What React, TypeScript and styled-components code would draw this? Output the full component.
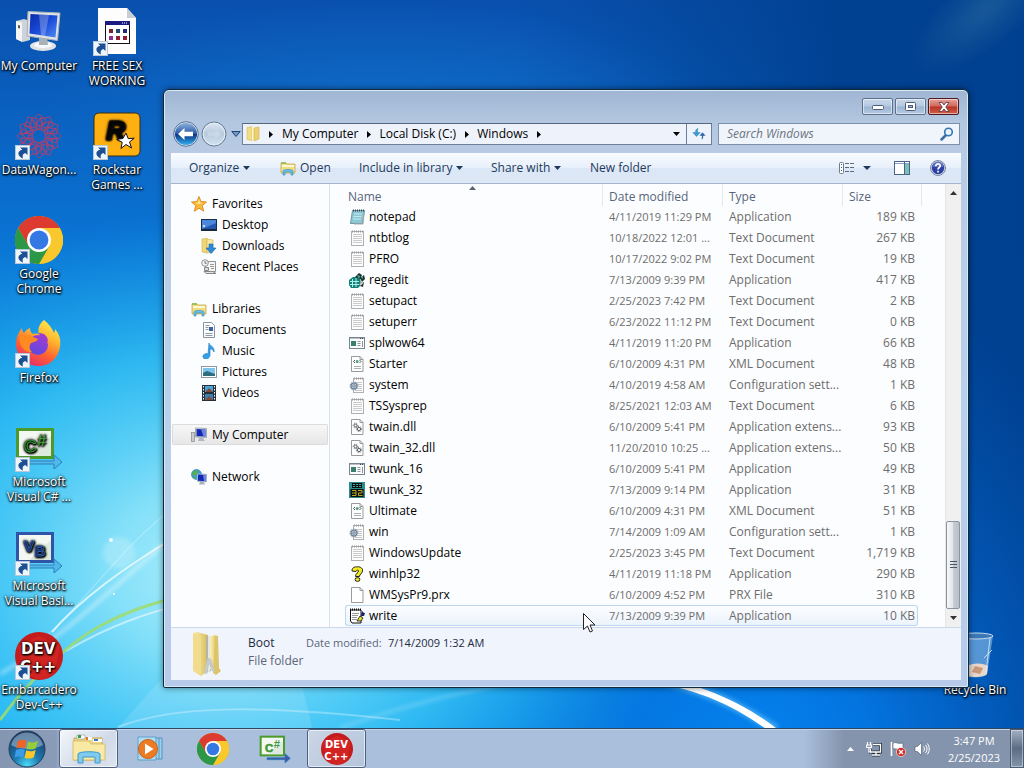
import React from "react";
import styled, { createGlobalStyle, css } from "styled-components";

const GlobalStyle = createGlobalStyle`
  *, *::before, *::after { box-sizing: border-box; }
  body { margin: 0; overflow: hidden; }
  body, button, input, table {
    font-family: "Open Sans", "Noto Sans", sans-serif;
    font-size: 12px;
    line-height: 16px;
  }
  button, input { border: 0; padding: 0; margin: 0; background: none; color: inherit; }
  svg { display: block; flex: none; }
`;

/* ---------- wallpaper ---------- */

const Screen = styled.div`
  position: relative;
  display: flex;
  flex-direction: column;
  height: 100vh;
  overflow: hidden;
  background: #0a63c4;
`;

const WallpaperSvg = styled.svg`
  position: absolute;
  inset: 0;
  width: 100%;
  height: 100%;
`;

const Wallpaper = () => (
  <WallpaperSvg viewBox="0 0 1024 768" preserveAspectRatio="none" aria-hidden="true">
    <defs>
      <linearGradient id="wBase" x1="0" y1="0" x2="0" y2="1">
        <stop offset="0" stopColor="#0a50ae" />
        <stop offset="0.3" stopColor="#0a72d2" />
        <stop offset="0.55" stopColor="#12a0ea" />
        <stop offset="1" stopColor="#10a4f2" />
      </linearGradient>
      <linearGradient id="wRight" x1="0" y1="0" x2="1" y2="0">
        <stop offset="0.5" stopColor="#004294" stopOpacity="0" />
        <stop offset="0.82" stopColor="#004090" stopOpacity="0.95" />
        <stop offset="1" stopColor="#004090" />
      </linearGradient>
      <radialGradient id="wRightLow" gradientUnits="userSpaceOnUse" cx="0" cy="0" r="1" gradientTransform="translate(760 800) scale(420 560)">
        <stop offset="0" stopColor="#0488f4" />
        <stop offset="0.3" stopColor="#0478e6" stopOpacity="0.9" />
        <stop offset="1" stopColor="#0460c8" stopOpacity="0" />
      </radialGradient>
      <radialGradient id="wGlow" gradientUnits="userSpaceOnUse" cx="0" cy="0" r="1" gradientTransform="translate(220 570) scale(460 360)">
        <stop offset="0" stopColor="#b4f1fb" />
        <stop offset="0.25" stopColor="#8ee6fa" stopOpacity="0.9" />
        <stop offset="0.6" stopColor="#3cc8f6" stopOpacity="0.7" />
        <stop offset="1" stopColor="#18a0ee" stopOpacity="0" />
      </radialGradient>
      <radialGradient id="wTop" gradientUnits="userSpaceOnUse" cx="0" cy="0" r="1" gradientTransform="translate(380 130) scale(340 130)">
        <stop offset="0" stopColor="#1472cc" stopOpacity="0.7" />
        <stop offset="1" stopColor="#1472cc" stopOpacity="0" />
      </radialGradient>
      <radialGradient id="wCorner" gradientUnits="userSpaceOnUse" cx="0" cy="0" r="1" gradientTransform="translate(985 10) rotate(-40) scale(90 36)">
        <stop offset="0" stopColor="#3070a0" stopOpacity="0.5" />
        <stop offset="1" stopColor="#3070a0" stopOpacity="0" />
      </radialGradient>
      <filter id="wSoft" x="-20%" y="-20%" width="140%" height="140%">
        <feGaussianBlur stdDeviation="2" />
      </filter>
    </defs>
    <rect width="1024" height="768" fill="url(#wBase)" />
    <rect width="1024" height="768" fill="url(#wRight)" />
    <rect width="1024" height="768" fill="url(#wRightLow)" />
    <rect width="1024" height="768" fill="url(#wTop)" />
    <rect width="1024" height="768" fill="url(#wCorner)" />
    <rect width="1024" height="768" fill="url(#wGlow)" />
    <path d="M118 728C150 690 200 640 230 600L290 640C300 680 308 705 312 728Z" fill="#fff" opacity="0.12" />
    <path d="M0 674C60 640 110 590 164 544" fill="none" stroke="#fff" strokeWidth="3" opacity="0.5" filter="url(#wSoft)" />
    <path d="M52 632C80 600 120 570 180 534" fill="none" stroke="#fff" strokeWidth="2" opacity="0.7" />
    <path d="M30 650C80 610 110 560 164 515" fill="none" stroke="#fff" strokeWidth="1" opacity="0.4" />
    <path d="M66 651C110 625 150 612 190 602" fill="none" stroke="#fff" strokeWidth="2" opacity="0.5" />
    <path d="M0 720C22 690 60 648 100 626C125 612 145 606 180 596" fill="none" stroke="#9fdc6c" strokeWidth="3" opacity="0.85" />
    <circle cx="119" cy="553" r="16" fill="#fff" opacity="0.22" filter="url(#wSoft)" />
    <circle cx="111" cy="540" r="2" fill="#fff" opacity="0.8" />
    <circle cx="114" cy="594" r="1" fill="#fff" opacity="0.9" />
    <path d="M118 727C170 707 250 703 400 720" fill="none" stroke="#fff" strokeWidth="2" opacity="0.3" />
    <path d="M340 728C450 690 520 680 600 672" fill="none" stroke="#fff" strokeWidth="2" opacity="0.35" filter="url(#wSoft)" />
    <path d="M640 676C700 685 740 706 776 730" fill="none" stroke="#7fd4ff" strokeWidth="10" opacity="0.5" filter="url(#wSoft)" />
    <path d="M640 674C698 682 744 702 781 732L770 732C736 706 694 687 640 680Z" fill="#fff" />
  </WallpaperSvg>
);

/* ---------- large icons ---------- */

const ChromeShape = ({ size }: { size: number }) => (
  <svg width={size} height={size} viewBox="0 0 48 48">
    <circle cx="24" cy="24" r="24" fill="#e2a800" />
    <path d="M24 12h20.8A24 24 0 0 1 24 48l10.4-18z" fill="#f9c82c" />
    <path d="M24 12h20.8A24 24 0 0 0 3.2 12l10.4 18z" fill="#dd3b2f" />
    <path d="M34.4 30L24 48A24 24 0 0 1 3.2 12l10.4 18z" fill="#2d9748" />
    <circle cx="24" cy="24" r="12" fill="#fff" />
    <circle cx="24" cy="24" r="9.4" fill="#3478e4" />
  </svg>
);

const ShortcutArrow = () => (
  <g>
    <rect x="0.5" y="33.5" width="14" height="14" fill="#eef5fb" stroke="#b8c8d6" />
    <path d="M5 35.500H12.500V43L10.300 41C8 41.500 7 43.500 8 46.500C2 44 2 39 7.300 37.800Z" fill="#1d4f93" />
  </g>
);

const ComputerBig = () => (
  <svg width="48" height="48" viewBox="0 0 48 48">
    <defs>
      <linearGradient id="scr" x1="0" y1="0" x2="1" y2="1">
        <stop offset="0" stopColor="#0a2aa8" />
        <stop offset="0.5" stopColor="#1a4ad8" />
        <stop offset="1" stopColor="#4f8cf4" />
      </linearGradient>
    </defs>
    <path d="M1 13L9 11L15 13V32L8 34L1 31Z" fill="#cdd3d8" />
    <path d="M1 13L7 14.500V34L1 31Z" fill="#f2f4f5" />
    <path d="M3 17l2 .5v3l-2-.5z" fill="#555" />
    <ellipse cx="28" cy="38" rx="13" ry="5" fill="#dfe3e6" />
    <ellipse cx="28" cy="37" rx="9" ry="3" fill="#f8f9fa" />
    <path d="M24 29h8l1 8h-9z" fill="#aab2b9" />
    <path d="M13 3.500L45 5L42.500 32.500L12 28Z" fill="#dfe3e6" stroke="#a8b0b8" />
    <path d="M15.500 6L42.500 7.500L40.500 29.500L14.500 25.500Z" fill="url(#scr)" />
    <path d="M24 6.500L34 7L30 28L26 27.300Z" fill="#fff" opacity="0.25" />
  </svg>
);

const AppSheet = () => (
  <svg width="48" height="48" viewBox="0 0 48 48">
    <path d="M5 0H34L43 10V46H5Z" fill="#fdfdfd" />
    <path d="M34 0V10H43Z" fill="#c9ced2" />
    <rect x="12.500" y="13.500" width="24" height="22" fill="#fff" stroke="#111" />
    <rect x="12" y="13" width="25" height="4" fill="#1a1a80" />
    <path d="M29 15h6" stroke="#fff" strokeDasharray="1 1" />
    <rect x="16" y="21" width="4" height="4" fill="#7a2230" />
    <rect x="23" y="21" width="4" height="4" fill="#224a6a" />
    <rect x="30" y="21" width="4" height="4" fill="#222a80" />
    <rect x="16" y="28" width="4" height="4" fill="#903090" />
    <rect x="23" y="28" width="4" height="4" fill="#902030" />
    <rect x="30" y="28" width="4" height="4" fill="#902030" />
    <ShortcutArrow />
  </svg>
);

const Wagon = () => (
  <svg width="48" height="48" viewBox="0 0 48 48">
    <g fill="none" stroke="#b0406c" strokeWidth="0.900">
      {[0, 30, 60, 90, 120, 150, 180, 210, 240, 270, 300, 330].map((a) => (
        <g key={a} transform={`rotate(${a} 24 24)`}>
          <path d="M24 18L17 8L24 2L31 8Z" />
          <path d="M24 14L35 9L32 21" />
        </g>
      ))}
      <circle cx="24" cy="24" r="7" />
    </g>
    <ShortcutArrow />
  </svg>
);

const IconText = styled.text<{ $font?: string }>`
  font-family: ${(p) => p.$font || '"Liberation Sans"'}, sans-serif;
  font-weight: 700;
`;

const Rockstar = () => (
  <svg width="48" height="48" viewBox="0 0 48 48">
    <rect x="1" y="1" width="46" height="43" rx="5" fill="#fdb010" stroke="#3a2c10" />
    <IconText x="13" y="27" fontSize="26" fontStyle="italic" fill="#0d0d0d" stroke="#0d0d0d">R</IconText>
    <path d="M33 21l2.200 5.600 6-.4-4.700 3.800 2 6-5.500-3.500-5 4 1.200-6.300-5.600-2.800 6.300-.9z" fill="#fff" stroke="#111" />
    <ShortcutArrow />
  </svg>
);

const ChromeBig = () => (
  <svg width="48" height="48" viewBox="0 0 48 48">
    <ChromeShape size={48} />
    <ShortcutArrow />
  </svg>
);

const Firefox = () => (
  <svg width="48" height="48" viewBox="0 0 48 48">
    <defs>
      <linearGradient id="ff" x1="0.8" y1="0" x2="0.3" y2="1">
        <stop offset="0" stopColor="#fff04f" />
        <stop offset="0.35" stopColor="#ffb52e" />
        <stop offset="0.65" stopColor="#ff6530" />
        <stop offset="1" stopColor="#e62a6d" />
      </linearGradient>
      <linearGradient id="ffp" x1="0.7" y1="0" x2="0.3" y2="1">
        <stop offset="0" stopColor="#a23ad0" />
        <stop offset="1" stopColor="#5a4ae0" />
      </linearGradient>
    </defs>
    <path d="M29 0C34 4 37 8 39 13C40 11 40 10 40 9C45 15 46 20 45 27C43 39 34 46 24 46C11 46 2 37 1 25C1 18 3 13 7 8C7 11 8 12 9 13C11 10 13 9 15 8C15 11 16 13 18 14C21 13 23 14 24 14C22 9 25 3 29 0Z" fill="url(#ff)" />
    <circle cx="23" cy="25" r="10" fill="url(#ffp)" />
    <path d="M4 18C9 14 14 14 18 17L23 19C22 22 18 22 16 23C14 26 14 29 17 32C9 33 5 26 4 18Z" fill="#ff8a20" />
    <path d="M24 13C30 13 33 17 33 22C31 19 28 17 25 17Z" fill="#9c3cd0" />
    <ShortcutArrow />
  </svg>
);

const VisualStudio = ({ kind, size = 48, arrow = true }: { kind: "cs" | "vb"; size?: number; arrow?: boolean }) => {
  const edge = kind === "cs" ? "#4c9a2c" : "#2f55a8";
  const ink = kind === "cs" ? "#3f9a3c" : "#2f5fb0";
  return (
    <svg width={size} height={size} viewBox="0 0 48 48">
      <rect x="1" y="4" width="38" height="31" fill={edge} />
      <rect x="4" y="7" width="32" height="25" fill="#f4f8f2" />
      <path d="M36 12V32H14Z" fill="#d4e4d4" opacity="0.7" />
      {kind === "cs" ? (
        <>
          <IconText x="9" y="28" fontSize="17" fill={ink} stroke={ink}>C</IconText>
          <IconText x="22" y="22" fontSize="17" fill={ink}>#</IconText>
        </>
      ) : (
        <>
          <IconText x="9" y="23" fontSize="15" fill={ink} stroke={ink}>V</IconText>
          <IconText x="20" y="28" fontSize="14" fill={ink} stroke={ink}>B</IconText>
        </>
      )}
      <path d="M12 37H39V31L47 38L39 45V40H12Z" fill={kind === "cs" && !arrow ? "#4058a8" : "#52b8ec"} stroke="#2a80b8" />
      {arrow && <ShortcutArrow />}
    </svg>
  );
};

const DevCpp = ({ size = 48, arrow = true }: { size?: number; arrow?: boolean }) => (
  <svg width={size} height={size} viewBox="0 0 48 48">
    <circle cx="24" cy="24" r="24" fill="#c41c1c" />
    <path d="M3 14L24 4l21 10-6 28-12 6L9 42z" fill="#dc2a26" opacity="0.6" />
    <IconText $font='"DejaVu Sans"' x="6" y="22" fontSize="15" fill="#fff">DEV</IconText>
    <IconText $font='"DejaVu Sans"' x="5" y="40" fontSize="15" fill="#fff">C++</IconText>
    {arrow && <ShortcutArrow />}
  </svg>
);

const RecycleBin = () => (
  <svg width="48" height="48" viewBox="0 0 48 48">
    <path d="M8 5L42 4L36 42C35 46 15 47 14 42Z" fill="#9cc8ee" opacity="0.55" />
    <ellipse cx="25" cy="4" rx="17" ry="3" fill="#3a78b8" stroke="#c8dce8" />
    <path d="M14 36C20 30 32 31 37 34L36 42C33 46 16 46 14 42Z" fill="#e8d8cc" />
    <path d="M24 34l8 2-3 6-8-2z" fill="#c89878" />
    <path d="M39 6L35 41M41 18L33 26" stroke="#dcecf8" fill="none" opacity="0.8" />
  </svg>
);

/* ---------- desktop ---------- */

const Desktop = styled.main`
  position: relative;
  flex: 1;
  min-height: 0;
  display: grid;
  grid-template-columns: repeat(auto-fill, 78px);
  grid-template-rows: repeat(7, 104px);
  grid-auto-flow: column;
`;

const DesktopButton = styled.button<{ $last?: boolean }>`
  display: flex;
  flex-direction: column;
  align-items: center;
  gap: 2px;
  padding-top: 8px;
  color: #fff;
  line-height: 15px;
  text-shadow: 0 1px 2px #000, 1px 1px 2px #000, 0 0 3px rgba(0, 0, 0, 0.8);
  ${(p) => p.$last && css`grid-column: -2 / -1; grid-row: 7;`}
`;

const Label = styled.span`
  white-space: pre;
  text-align: center;
`;

type Entry = [string, React.ReactNode];

const desktopEntries: Entry[] = [
  ["My Computer", <ComputerBig />],
  ["DataWagon...", <Wagon />],
  ["Google\nChrome", <ChromeBig />],
  ["Firefox", <Firefox />],
  ["Microsoft\nVisual C# ...", <VisualStudio kind="cs" />],
  ["Microsoft\nVisual Basi...", <VisualStudio kind="vb" />],
  ["Embarcadero\nDev-C++", <DevCpp />],
  ["FREE SEX\nWORKING", <AppSheet />],
  ["Rockstar\nGames ...", <Rockstar />],
];

/* ---------- small icons ---------- */

const Small = ({ children, size = 16 }: { children: React.ReactNode; size?: number }) => (
  <svg width={size} height={size} viewBox="0 0 16 16" aria-hidden="true">{children}</svg>
);

const FolderIcon = () => (
  <Small>
    <path d="M2 1.500l5-1v14l-5-1z" fill="#f2dc84" stroke="#d8bc60" strokeWidth="0.600" />
    <path d="M7 .5l3 1V13l-3 2z" fill="#fdf6c8" />
    <path d="M9 2l5-1v12l-5 2z" fill="#ecd070" stroke="#d0b050" strokeWidth="0.600" />
  </Small>
);

const LibraryIcon = () => (
  <Small>
    <path d="M1 3h5l1 1h8v9H1z" fill="#f0dc84" stroke="#c8a848" strokeWidth="0.800" />
    <path d="M2 5h12v2H2z" fill="#fff8d0" />
    <path d="M1 2h5v2H1z" fill="#9cc060" />
    <path d="M3 15V11c0-2 10-2 10 0v4h-2v-3H5v3z" fill="#6cc0e8" stroke="#3a90c0" strokeWidth="0.700" />
  </Small>
);

const StarIcon = () => (
  <Small>
    <path d="M8 0.500l2 5 5.500.5-4.200 3.600 1.400 5.600L8 12.200l-4.700 3 1.400-5.600L.5 6 6 5.500z" fill="#fcb838" stroke="#d88820" strokeWidth="0.900" />
    <path d="M8 3l1.200 3.500L12 7 8 8 4 7l2.800-.5z" fill="#ffe490" />
  </Small>
);

const DesktopIcon = () => (
  <Small>
    <rect x="0.500" y="2.500" width="15" height="11" fill="#2458b0" stroke="#1a2c48" />
    <path d="M1 3h14v3L1 12z" fill="#4a88dc" />
    <rect x="1" y="12" width="14" height="1.500" fill="#16243c" />
    <rect x="2" y="8" width="2" height="2" fill="#c8e0f8" />
  </Small>
);

const DownloadsIcon = () => (
  <Small>
    <path d="M1 1l5-1v15l-5-1z" fill="#f0d878" stroke="#d0b050" strokeWidth="0.600" />
    <path d="M6 1l6 1v12l-6 1z" fill="#f8e8a0" stroke="#d0b050" strokeWidth="0.600" />
    <path d="M8 6h4v4h3l-5 5.500L5 10h3z" fill="#2d8ad8" stroke="#1868b0" strokeWidth="0.600" />
  </Small>
);

const RecentIcon = () => (
  <Small>
    <path d="M4.500 2.500h10v10h-10z" fill="#f6f6f6" stroke="#909090" />
    <path d="M9 5.500h4M9 7.500h4M10 9.500h3" stroke="#999" />
    <path d="M3 12.500h9l3 2H5z" fill="#e4e4e4" stroke="#888" />
    <circle cx="4" cy="4" r="3.300" fill="#f0f4f8" stroke="#888" strokeWidth="0.900" />
    <path d="M4 2V4.300h1.700" fill="none" stroke="#555" strokeWidth="0.800" />
    <path d="M3.500 8.500h4v3h-4z" fill="#ddd" stroke="#888" />
  </Small>
);

const DocumentsIcon = () => (
  <Small>
    <path d="M2.500.5h8l3 3v12h-11z" fill="#fdfdfd" stroke="#8a94a0" />
    <path d="M4.500 3.500h4M4.500 5.500h3M4.500 7.500h3M4.500 11.500h7M4.500 13.500h7" stroke="#8a98a8" />
    <rect x="8" y="5" width="4" height="4" fill="#3a62a0" />
  </Small>
);

const MusicIcon = () => (
  <Small>
    <path d="M8 0c0 3 6 3 5 9-.5-2-2-3-4-3v6c0 5-8 5-7 1 .5-2 3-3 5-2z" fill="#38a0e8" stroke="#1c78c0" strokeWidth="0.600" />
  </Small>
);

const PicturesIcon = () => (
  <Small>
    <rect x="0.500" y="2.500" width="15" height="11" fill="#fff" stroke="#8a98a8" />
    <rect x="2" y="4" width="12" height="8" fill="#7cc4ec" />
    <path d="M2 9l4-2 8 3v2H2z" fill="#2c6c7c" />
  </Small>
);

const VideosIcon = () => (
  <Small>
    <rect x="1" y="0" width="14" height="16" fill="#26303a" />
    <rect x="4" y="1" width="8" height="6" fill="#4aa4d8" />
    <rect x="4" y="9" width="8" height="6" fill="#3a80b0" />
    <path d="M5 6l3-3 4 4H5zM5 14l3-3 4 4H5z" fill="#844a38" />
    <path d="M2.500 1v15M13.500 1v15" stroke="#fff" strokeDasharray="1.500 1.500" />
  </Small>
);

const ComputerIcon = () => (
  <Small>
    <rect x="0.500" y="5.500" width="3" height="9" fill="#c8ccd0" stroke="#888" strokeWidth="0.700" />
    <path d="M4.500 1l11 .5v9L4.500 10z" fill="#e0e4e8" stroke="#8890a0" strokeWidth="0.700" />
    <path d="M5.500 2l9 .4v7.200l-9-.4z" fill="#1428b0" />
    <path d="M10 2.200l4.500.2v7.200l-2-.1z" fill="#6a84e4" />
    <path d="M8 11h4l2 3H7z" fill="#b0b8c0" />
  </Small>
);

const NetworkIcon = () => (
  <Small>
    <circle cx="5.500" cy="5.500" r="5" fill="#3c9ed4" stroke="#2878a8" strokeWidth="0.600" />
    <path d="M3 1.500l4 .5-1 3-3 2-2-2zM2 8l3 0-1 2z" fill="#58b048" />
    <path d="M6.500 5l9 .4v7.400l-9-.6z" fill="#1428b0" stroke="#a8b4c8" />
    <path d="M12 6l3 .2v6l-2-.1z" fill="#6a84e4" />
    <path d="M9 13h4l1 2.500H8z" fill="#a8b0b8" />
  </Small>
);

const Sheet = ({ children }: { children?: React.ReactNode }) => (
  <Small>
    <path d="M2.500.5h8.500l3 3v12H2.500z" fill="#fff" stroke="#9a9a9a" />
    <path d="M11 .5v3h3" fill="none" stroke="#9a9a9a" />
    {children}
  </Small>
);

const TextSheet = () => (
  <Small>
    <rect x="2.500" y="1.500" width="12" height="14" fill="#fdfdfd" stroke="#b0b0b0" />
    <path d="M3 1.500h12" stroke="#999" strokeWidth="2" strokeDasharray="1 1" />
    <path d="M4 4.500h9M4 6.500h9M4 8.500h9M4 10.500h9M4 12.500h9" stroke="#cacaca" />
  </Small>
);

const Gear = ({ x, y, r, c = "#6a7c90" }: { x: number; y: number; r: number; c?: string }) => (
  <g fill="none" stroke={c}>
    <circle cx={x} cy={y} r={r} strokeWidth="1" />
    <circle cx={x} cy={y} r={r + 1} strokeWidth="1" strokeDasharray="1 1.200" />
  </g>
);

const fileIcons = {
  notepad: () => (
    <Small>
      <path d="M3.500 1.500h12l-2 13h-12z" fill="#8cc8d4" stroke="#6898a4" />
      <path d="M4 1.500h11" stroke="#445" strokeWidth="2" strokeDasharray="1 1" />
      <path d="M5 5h8M4.500 7.500h8M4 10h8" stroke="#c4e8ee" />
      <path d="M15 4l-1 11H5" fill="none" stroke="#aaa" />
    </Small>
  ),
  text: TextSheet,
  regedit: () => (
    <Small>
      <path d="M0 8l4-3h7l1 8-3 3H2l-2-3z" fill="#108078" />
      <path d="M1 9.500h9M1 12.500h9M3.500 7v8M7 6v9" stroke="#b0f0e8" />
      <path d="M6 5l4-4 3 2-2 4zM11 6l4-3 1 4-3 3zM12 10l3 0-1 5-3-1z" fill="#20302c" />
      <path d="M8 3l3 1-1 3zM12 5l2-1v3z" fill="#50b0a4" />
      <path d="M11 13l3-3" stroke="#ccc" strokeWidth="2" />
    </Small>
  ),
  exe: () => (
    <Small>
      <rect x="0.500" y="2.500" width="15" height="11" fill="#fdfdfd" stroke="#788490" />
      <path d="M1 3.500h14" stroke="#b4c0cc" />
      <path d="M11 3.500h3" stroke="#445" strokeDasharray="1 1" />
      <rect x="2" y="6" width="5" height="5" fill="#38806c" />
      <path d="M8.500 6.500h3M8.500 8.500h3M8.500 10.500h3M13.500 6v6" stroke="#8a949c" />
    </Small>
  ),
  xml: () => (
    <Sheet>
      <path d="M6 4L4.500 5.500 6 7M10.500 4L12 5.500 10.500 7" fill="none" stroke="#555" />
      <circle cx="8.200" cy="5.500" r="1.500" fill="#50a080" />
      <path d="M5 10.500h7M5 12.500h7" stroke="#a8b0b8" />
    </Sheet>
  ),
  config: () => (
    <Small>
      <rect x="4.500" y="1.500" width="10" height="14" fill="#fdfdfd" stroke="#b0b0b0" />
      <path d="M5 1.500h10" stroke="#999" strokeWidth="2" strokeDasharray="1 1" />
      <path d="M6 5.500h7M9 7.500h4M10 9.500h3M9 11.500h4M6 13.500h7" stroke="#c8c8c8" />
      <circle cx="5" cy="9" r="4" fill="#b8c8d8" />
      <Gear x={5} y={9} r={3} />
      <circle cx="5" cy="9" r="1.200" fill="#fff" stroke="#6a7c90" />
    </Small>
  ),
  dll: () => (
    <Sheet>
      <Gear x={6.500} y={6.500} r={1.400} c="#555e66" />
      <Gear x={10} y={10} r={1.600} c="#555e66" />
    </Sheet>
  ),
  dos: () => (
    <Small>
      <rect x="0" y="0" width="16" height="16" fill="#2c8c8c" />
      <path d="M3 1h10v5H3zM1.500 7h13v8h-13z" fill="#0c1010" />
      <path d="M4 2.500h8M4 4.500h8" stroke="#38a4a4" strokeDasharray="2 1" />
      <path d="M3 8.500h4v5H3M3 11h4M9 8.500h4V11H9.500v2.500H13.500" fill="none" stroke="#b8a820" />
    </Small>
  ),
  help: () => (
    <Small>
      <path d="M3 5C3 1 6 .8 8.500.8C12 .8 14 2.500 13.500 5C13 8 10.500 8 10.500 10.500H6.500C6.500 7 9.500 7 9.500 5C9.500 3.800 7.500 3.800 7 5.500Z" fill="#f4ec20" stroke="#222" />
      <ellipse cx="8.500" cy="13.500" rx="2.400" ry="1.900" fill="#f4ec20" stroke="#222" />
    </Small>
  ),
  blank: () => <Sheet />,
  write: () => (
    <Small>
      <path d="M1.500 2h10.500v13H3l-1.500-2z" fill="#fff" stroke="#111" />
      <path d="M1 1.500h12" stroke="#111" strokeWidth="2" strokeDasharray="1 1" />
      <path d="M3 5.500h7M3 7.500h6M3 9.500h5M3 11.500h5" stroke="#999" />
      <path d="M8 13l3-5 3 2-2 3z" fill="#e8e020" stroke="#111" strokeWidth="0.800" />
      <path d="M12 8l1-5 2 2 1 0-1 3z" fill="#1c1c70" />
    </Small>
  ),
};

/* ---------- explorer window ---------- */

const Window = styled.section`
  position: absolute;
  inset: 89px 55px 40px 163px;
  display: flex;
  flex-direction: column;
  border: 1px solid #14283c;
  border-radius: 6px 6px 2px 2px;
  padding: 0 6px 6px;
  box-shadow: inset 0 0 0 1px #d4ecfa, 0 0 6px rgba(0, 0, 0, 0.5);
  background: linear-gradient(180deg, #9fb5d2 0, #b3c7e0 32px, #b9cbe4 64px, #b9d0ea 50%, #b8caea 100%);
`;

const TitleBar = styled.header`
  display: flex;
  justify-content: flex-end;
  gap: 2px;
  height: 33px;
  padding: 8px 3px 0 0;
`;

const CaptionButton = styled.button<{ $close?: boolean }>`
  display: flex;
  align-items: center;
  justify-content: center;
  width: 31px;
  height: 17px;
  border: 1px solid ${(p) => (p.$close ? "#4c1a20" : "#5c708c")};
  border-radius: 2px;
  box-shadow: inset 0 0 0 1px rgba(255, 255, 255, 0.5);
  background: ${(p) =>
    p.$close
      ? "linear-gradient(#e4a49c, #d0685c 48%, #b83424 52%, #d0604c)"
      : "linear-gradient(#c8d8ea, #b4c8e0 48%, #9cb4d2 52%, #b4cae2)"};
`;

const NavBar = styled.nav`
  display: flex;
  align-items: center;
  height: 22px;
  margin-bottom: 8px;
  padding: 0 2px 0 1px;
`;

const HistoryButtons = styled.div`
  display: flex;
  align-items: center;
  gap: 2px;
  width: 71px;
  padding-left: 2px;
`;

const HistoryButton = styled.button`
  display: flex;
  margin: -2px 0;
`;

const AddressBar = styled.div`
  display: flex;
  flex: 1;
  align-items: stretch;
  height: 22px;
  border: 1px solid #6c809c;
  border-top-color: #56687f;
  background: #eef3fb;
`;

const Crumb = styled.button`
  display: flex;
  align-items: center;
  gap: 9px;
  padding: 0 8px 0 0;
  color: #000;
`;

const FolderSlot = styled.span`
  display: flex;
  align-items: center;
  gap: 8px;
  padding: 0 9px 0 2px;
`;

const AddressEnd = styled.button<{ $divided?: boolean }>`
  display: flex;
  align-items: center;
  justify-content: center;
  width: ${(p) => (p.$divided ? 25 : 20)}px;
  margin-left: ${(p) => (p.$divided ? 0 : "auto")};
  border-left: ${(p) => (p.$divided ? "1px solid #6c809c" : "0")};
`;

const SearchBox = styled.label`
  display: flex;
  align-items: center;
  flex: 0 1 242px;
  height: 22px;
  margin-left: 6px;
  padding: 0 5px 0 8px;
  border: 1px solid #7c90ac;
  background: #f0f5fc;
`;

const SearchInput = styled.input`
  flex: 1;
  min-width: 0;
  outline: 0;
  font-style: italic;
  &::placeholder { color: #6c7480; opacity: 1; }
`;

const Content = styled.div`
  display: flex;
  flex-direction: column;
  flex: 1;
  min-height: 0;
  margin: 0 1px 1px;
  background: #fcfdfe;
`;

const Toolbar = styled.div`
  display: flex;
  align-items: center;
  height: 31px;
  padding: 0 15px 0 18px;
  border-bottom: 1px solid #a4b4cc;
  color: #1e395b;
  background: linear-gradient(#fafcff, #e8f0fb 48%, #dbe7f6 52%, #dde8f6);
`;

const ToolButton = styled.button<{ $w?: number }>`
  display: flex;
  align-items: center;
  gap: 4px;
  width: ${(p) => (p.$w ? `${p.$w}px` : "auto")};
  white-space: nowrap;
`;

const ToolSpacer = styled.div`
  flex: 1;
`;

const ToolEnd = styled.div`
  display: flex;
  align-items: center;
  gap: 8px;
`;

const Panes = styled.div`
  display: flex;
  flex: 1;
  min-height: 0;
`;

const Sidebar = styled.aside`
  display: flex;
  flex-direction: column;
  flex: none;
  gap: 21px;
  width: 159px;
  padding-top: 9px;
  border-right: 1px solid #d6e2f0;
`;

const SideGroup = styled.div`
  display: flex;
  flex-direction: column;
`;

const SideItem = styled.a<{ $child?: boolean; $active?: boolean }>`
  display: flex;
  align-items: center;
  gap: 5px;
  height: 21px;
  margin: 0 1px;
  padding-left: ${(p) => (p.$child ? 29 : 19)}px;
  border-radius: 2px;
  color: #000;
  text-decoration: none;
  ${(p) =>
    p.$active &&
    css`
      background: linear-gradient(#f8f8f8, #e6e6e6);
      box-shadow: inset 0 0 0 1px #dcdcdc;
    `}
`;

const ListPane = styled.div`
  flex: 1;
  min-width: 0;
  padding: 0 23px 0 15px;
  overflow: hidden;
`;

const FileTable = styled.table`
  width: 100%;
  table-layout: fixed;
  border-collapse: separate;
  border-spacing: 0;
`;

const Col = styled.col<{ $w?: number }>`
  width: ${(p) => (p.$w ? `${p.$w}px` : "auto")};
`;

const Th = styled.th<{ $first?: boolean; $edge?: boolean }>`
  height: 22px;
  padding: ${(p) => (p.$edge ? "0" : p.$first ? "3px 0 0 3px" : "3px 0 0 6px")};
  border-left: ${(p) => (p.$first || p.$edge ? "0" : "1px solid #e2e8f0")};
  border-right: ${(p) => (p.$edge ? "1px solid #e2e8f0" : "0")};
  font-weight: 400;
  text-align: left;
  color: #56667c;
  white-space: nowrap;
`;

const SortMark = styled.svg`
  position: absolute;
  top: 96px;
  left: 305px;
`;

const Td = styled.td<{ $right?: boolean; $main?: boolean; $date?: boolean }>`
  height: 21px;
  padding: ${(p) => (p.$main ? "0 0 0 4px" : p.$right ? "0 3px 0 0" : "0 0 0 7px")};
  font-size: ${(p) => (p.$date ? 11 : 12)}px;
  text-align: ${(p) => (p.$right ? "right" : "left")};
  color: ${(p) => (p.$main ? "#000" : "#6d6d6d")};
  white-space: nowrap;
`;

const Row = styled.tr<{ $hot?: boolean }>`
  ${(p) =>
    p.$hot &&
    css`
      td:not(:last-child) {
        border: solid #bcd8f0;
        border-width: 1px 0;
        background: linear-gradient(#fcfdff, #ebf3fc);
      }
      td:first-child { border-left-width: 1px; border-radius: 3px 0 0 3px; padding-left: 3px; }
      td:nth-child(4) { border-right-width: 1px; border-radius: 0 3px 3px 0; padding-right: 2px; }
    `}
`;

const FileName = styled.span`
  display: flex;
  align-items: center;
  gap: 4px;
`;

const ScrollBar = styled.div`
  display: flex;
  flex-direction: column;
  flex: none;
  width: 16px;
  border-left: 1px solid #e4e6ea;
  background: #f0f0f1;
`;

const ScrollButton = styled.button`
  display: flex;
  align-items: center;
  justify-content: center;
  height: 18px;
`;

const ScrollTrack = styled.div`
  display: flex;
  flex: 1;
  flex-direction: column;
  justify-content: flex-end;
`;

const ScrollThumb = styled.div`
  display: flex;
  align-items: center;
  justify-content: center;
  height: 88px;
  margin: 0 1px 0 0;
  border: 1px solid #8c949e;
  border-radius: 2px;
  background: linear-gradient(90deg, #f6f7f8, #e2e5e9 50%, #c4cad2 55%, #b8c0ca);
`;

const Details = styled.footer`
  display: flex;
  align-items: center;
  height: 53px;
  padding-left: 17px;
  border-top: 1px solid #ccd8ea;
  background: #f0f4fd;
`;

const DetailGrid = styled.dl`
  display: grid;
  grid-template-columns: 58px 82px auto;
  row-gap: 2px;
  margin: 0 0 4px 20px;
`;

const DetailText = styled.dd<{ $dark?: boolean; $date?: boolean }>`
  margin: 0;
  font-size: ${(p) => (p.$date ? 11 : 12)}px;
  white-space: nowrap;
  color: ${(p) => (p.$dark ? "#1e2c40" : "#5a6779")};
`;

const DownArrow = ({ w = 7, fill = "#1e395b" }: { w?: number; fill?: string }) => (
  <svg width={w} height="4" viewBox="0 0 7 4" preserveAspectRatio="none"><path d="M0 0h7L3.500 4z" fill={fill} /></svg>
);

const RightArrow = () => (
  <svg width="4" height="7" viewBox="0 0 4 7"><path d="M0 0v7l4-3.500z" fill="#000" /></svg>
);

const UpArrow = ({ fill = "#333" }: { fill?: string }) => (
  <svg width="7" height="4" viewBox="0 0 7 4"><path d="M0 4h7L3.500 0z" fill={fill} /></svg>
);

type FileRow = [keyof typeof fileIcons, string, string, string, string];

const files: FileRow[] = [
  ["notepad", "notepad", "4/11/2019 11:29 PM", "Application", "189 KB"],
  ["text", "ntbtlog", "10/18/2022 12:01 ...", "Text Document", "267 KB"],
  ["text", "PFRO", "10/17/2022 9:02 PM", "Text Document", "19 KB"],
  ["regedit", "regedit", "7/13/2009 9:39 PM", "Application", "417 KB"],
  ["text", "setupact", "2/25/2023 7:42 PM", "Text Document", "2 KB"],
  ["text", "setuperr", "6/23/2022 11:12 PM", "Text Document", "0 KB"],
  ["exe", "splwow64", "4/11/2019 11:20 PM", "Application", "66 KB"],
  ["xml", "Starter", "6/10/2009 4:31 PM", "XML Document", "48 KB"],
  ["config", "system", "4/10/2019 4:58 AM", "Configuration sett...", "1 KB"],
  ["text", "TSSysprep", "8/25/2021 12:03 AM", "Text Document", "6 KB"],
  ["dll", "twain.dll", "6/10/2009 5:41 PM", "Application extens...", "93 KB"],
  ["dll", "twain_32.dll", "11/20/2010 10:25 ...", "Application extens...", "50 KB"],
  ["exe", "twunk_16", "6/10/2009 5:41 PM", "Application", "49 KB"],
  ["dos", "twunk_32", "7/13/2009 9:14 PM", "Application", "31 KB"],
  ["xml", "Ultimate", "6/10/2009 4:31 PM", "XML Document", "51 KB"],
  ["config", "win", "7/14/2009 1:09 AM", "Configuration sett...", "1 KB"],
  ["text", "WindowsUpdate", "2/25/2023 3:45 PM", "Text Document", "1,719 KB"],
  ["help", "winhlp32", "4/11/2019 11:18 PM", "Application", "290 KB"],
  ["blank", "WMSysPr9.prx", "6/10/2009 4:52 PM", "PRX File", "310 KB"],
  ["write", "write", "7/13/2009 9:39 PM", "Application", "10 KB"],
];

const sideGroups: { name: string; icon: React.ReactNode; active?: boolean; items: Entry[] }[] = [
  {
    name: "Favorites",
    icon: <StarIcon />,
    items: [
      ["Desktop", <DesktopIcon />],
      ["Downloads", <DownloadsIcon />],
      ["Recent Places", <RecentIcon />],
    ],
  },
  {
    name: "Libraries",
    icon: <LibraryIcon />,
    items: [
      ["Documents", <DocumentsIcon />],
      ["Music", <MusicIcon />],
      ["Pictures", <PicturesIcon />],
      ["Videos", <VideosIcon />],
    ],
  },
  { name: "My Computer", icon: <ComputerIcon />, active: true, items: [] },
  { name: "Network", icon: <NetworkIcon />, items: [] },
];

const Explorer = () => (
  <Window aria-label="Windows">
    <TitleBar>
      <CaptionButton aria-label="Minimize">
        <svg width="12" height="8"><rect x="0.500" y="2.500" width="11" height="4" rx="1" fill="#fff" stroke="#4c5c74" /></svg>
      </CaptionButton>
      <CaptionButton aria-label="Maximize">
        <svg width="11" height="9"><rect x="0.500" y="0.500" width="10" height="8" rx="1" fill="#fff" stroke="#4c5c74" /><rect x="3.500" y="3.500" width="4" height="2" fill="#a8bcd6" stroke="#4c5c74" /></svg>
      </CaptionButton>
      <CaptionButton $close aria-label="Close">
        <svg width="12" height="10" viewBox="0 0 12 10"><path d="M1 .5h3L6 3 8 .5h3L7.800 5 11 9.500H8L6 7 4 9.500H1L4.200 5z" fill="#fff" stroke="#5c3038" strokeWidth="0.800" /></svg>
      </CaptionButton>
    </TitleBar>
    <NavBar>
      <HistoryButtons>
        <HistoryButton aria-label="Back">
          <svg width="26" height="26" viewBox="0 0 26 26">
            <defs>
              <linearGradient id="bk" x1="0" y1="0" x2="0" y2="1">
                <stop offset="0" stopColor="#8cb0dc" />
                <stop offset="0.480" stopColor="#2a5ca8" />
                <stop offset="0.520" stopColor="#0c3484" />
                <stop offset="1" stopColor="#34b0f0" />
              </linearGradient>
            </defs>
            <circle cx="13" cy="13" r="12.300" fill="#d4e2f2" stroke="#5c7090" />
            <circle cx="13" cy="13" r="11" fill="url(#bk)" />
            <path d="M5 13l6.500-6v3.800h8.500v4.400h-8.500v3.800z" fill="#fff" />
          </svg>
        </HistoryButton>
        <HistoryButton aria-label="Forward">
          <svg width="26" height="26" viewBox="0 0 26 26">
            <defs>
              <linearGradient id="fw" x1="0" y1="0" x2="0" y2="1">
                <stop offset="0" stopColor="#dce8f4" />
                <stop offset="0.500" stopColor="#b8cadd" />
                <stop offset="1" stopColor="#d4e4f2" />
              </linearGradient>
            </defs>
            <circle cx="13" cy="13" r="12" fill="url(#fw)" stroke="#64788f" />
            <circle cx="13" cy="13" r="10.800" fill="none" stroke="#e4eef8" />
            <path d="M20 13l-6-5v3.300H7v3.400h7V18z" fill="#cad8e6" />
          </svg>
        </HistoryButton>
        <HistoryButton aria-label="Recent pages">
          <svg width="12" height="8" viewBox="0 0 12 8"><path d="M2.800 1.500h8.400L7 6.500z" fill="#6c98cc" stroke="#23456f" /></svg>
        </HistoryButton>
      </HistoryButtons>
      <AddressBar>
        <FolderSlot><FolderIcon /><RightArrow /></FolderSlot>
        <Crumb>My Computer<RightArrow /></Crumb>
        <Crumb>Local Disk (C:)<RightArrow /></Crumb>
        <Crumb>Windows<RightArrow /></Crumb>
        <AddressEnd aria-label="Previous locations"><DownArrow fill="#000" /></AddressEnd>
        <AddressEnd $divided aria-label="Refresh">
          <svg width="15" height="14" viewBox="0 0 15 14">
            <path d="M6 1.500C4.200 1.800 3.500 3 3.500 5.500H.8l3.700 4 3.700-4H5.500C5.500 4 5.500 2.500 6 1.500Z" fill="#3a9cd4" stroke="#1f70a8" strokeWidth="0.400" />
            <path d="M9 13c1.800-.3 2.500-1.500 2.500-4H14.200L10.500 5 6.800 9H9.500C9.500 10.500 9.500 12 9 13Z" fill="#2c64a8" stroke="#fff" strokeWidth="0.600" />
          </svg>
        </AddressEnd>
      </AddressBar>
      <SearchBox>
        <SearchInput placeholder="Search Windows" aria-label="Search Windows" />
        <svg width="14" height="14" viewBox="0 0 14 14">
          <path d="M6 8L1.500 12.500" stroke="#3c6ca4" strokeWidth="2.500" strokeLinecap="round" />
          <circle cx="8.500" cy="5" r="3.800" fill="#e8f4fc" stroke="#3474ac" strokeWidth="1.600" />
        </svg>
      </SearchBox>
    </NavBar>
    <Content>
      <Toolbar>
        <ToolButton $w={91}>Organize <DownArrow /></ToolButton>
        <ToolButton $w={79}><LibraryIcon />Open</ToolButton>
        <ToolButton $w={132}>Include in library <DownArrow /></ToolButton>
        <ToolButton $w={99}>Share with <DownArrow /></ToolButton>
        <ToolButton>New folder</ToolButton>
        <ToolSpacer />
        <ToolEnd>
          <ToolButton aria-label="Change view">
            <svg width="16" height="12" viewBox="0 0 16 12">
              <rect x="0.500" y="0.500" width="4" height="11" rx="1" fill="#fff" stroke="#6c7c90" />
              <path d="M2 2.500h1M2 5.500h1M2 8.500h1" stroke="#4c5c70" />
              <path d="M6 1.500h4M11 1.500h4M6 5.500h4M11 5.500h4M6 9.500h4M11 9.500h4" stroke="#5c6c80" />
            </svg>
          </ToolButton>
          <ToolButton $w={23} aria-label="More options"><DownArrow w={8} /></ToolButton>
          <ToolButton $w={28} aria-label="Preview pane">
            <svg width="16" height="14" viewBox="0 0 16 14">
              <rect x="0.500" y="0.500" width="15" height="13" fill="#fff" stroke="#4c6484" />
              <path d="M1 2.500h14" stroke="#8ca4c0" />
              <rect x="10" y="3" width="5" height="10" fill="#78c0b8" />
              <path d="M10.500 1v12" stroke="#4c6484" />
            </svg>
          </ToolButton>
          <ToolButton aria-label="Help">
            <svg width="16" height="16" viewBox="0 0 16 16">
              <circle cx="8" cy="8" r="7.500" fill="#d0d8e8" stroke="#7c88a4" />
              <circle cx="8" cy="8" r="6.200" fill="#2c40a4" />
              <path d="M2.500 7a5.500 5.500 0 0 1 11 0z" fill="#7c8cd0" opacity="0.600" />
              <path d="M5.800 6.200C5.800 3 10.400 3.300 10.200 6C10.100 7.500 8 7.600 8 9.400M8 10.800V12.400" fill="none" stroke="#fff" strokeWidth="1.700" />
            </svg>
          </ToolButton>
        </ToolEnd>
      </Toolbar>
      <Panes>
        <Sidebar>
          {sideGroups.map((g) => (
            <SideGroup key={g.name}>
              <SideItem href="#" $active={g.active}>{g.icon}{g.name}</SideItem>
              {g.items.map(([name, icon]) => (
                <SideItem key={name} href="#" $child>{icon}{name}</SideItem>
              ))}
            </SideGroup>
          ))}
        </Sidebar>
        <ListPane>
          <FileTable>
            <colgroup><Col /><Col $w={120} /><Col $w={120} /><Col $w={76} /><Col $w={4} /></colgroup>
            <thead>
              <tr><Th $first>Name</Th><Th>Date modified</Th><Th>Type</Th><Th>Size</Th><Th $edge /></tr>
            </thead>
            <tbody>
              {files.map(([icon, name, date, type, size]) => {
                const Icon = fileIcons[icon];
                return (
                  <Row key={name} $hot={name === "write"}>
                    <Td $main><FileName><Icon />{name}</FileName></Td>
                    <Td $date>{date}</Td>
                    <Td>{type}</Td>
                    <Td $right>{size}</Td>
                    <td />
                  </Row>
                );
              })}
            </tbody>
          </FileTable>
        </ListPane>
        <ScrollBar>
          <ScrollButton aria-label="Scroll up"><UpArrow /></ScrollButton>
          <ScrollTrack>
            <ScrollThumb>
              <svg width="7" height="8" viewBox="0 0 7 8"><path d="M0 .5h7M0 3.500h7M0 6.500h7" stroke="#4c545e" /></svg>
            </ScrollThumb>
          </ScrollTrack>
          <ScrollButton aria-label="Scroll down"><DownArrow fill="#333" /></ScrollButton>
        </ScrollBar>
      </Panes>
      <Details>
        <svg width="40" height="46" viewBox="0 0 40 46">
          <defs>
            <linearGradient id="fold" x1="0" y1="0" x2="1" y2="0">
              <stop offset="0" stopColor="#fbf0b4" />
              <stop offset="1" stopColor="#d8bc58" />
            </linearGradient>
          </defs>
          <path d="M5 2L9 1L20 4V40L13 45L5 40Z" fill="url(#fold)" />
          <path d="M5 2L13 5V45L5 40Z" fill="#f0dc8c" />
          <path d="M18 5l5 1v34l-5 2z" fill="#b4b4a8" />
          <path d="M20 5l2 .5v35l-2 .5z" fill="#e4e6e4" />
          <path d="M22 6L26 4L30 5V38L26 41L22 38Z" fill="url(#fold)" />
          <path d="M27 5L30 5L31 37L33 40L28 44L25 42Z" fill="#dcc468" />
          <path d="M16 42L19 28C21 26 23 27 24 30L27 42L24 40L21 33L19 43Z" fill="#c4cacc" />
        </svg>
        <DetailGrid>
          <DetailText $dark>Boot</DetailText>
          <DetailText as="dt" $date>Date modified:</DetailText>
          <DetailText $dark $date>7/14/2009 1:32 AM</DetailText>
          <DetailText>File folder</DetailText>
        </DetailGrid>
      </Details>
    </Content>
    <SortMark width="7" height="4" viewBox="0 0 7 4"><path d="M0 4h7L3.500 0z" fill="#5c6470" /></SortMark>
  </Window>
);

/* ---------- taskbar ---------- */

const Taskbar = styled.footer`
  position: relative;
  display: flex;
  flex: none;
  align-items: stretch;
  height: 40px;
  border-top: 1px solid #2c4866;
  box-shadow: inset 0 1px 0 #c4d4e6;
  color: #fff;
  background: linear-gradient(90deg, #8496b2 0, #8a9cb8 56px, #a9bfdc 64px, #a9bfdc calc(100% - 220px), #8494ac calc(100% - 180px), #8494ac 100%);
`;

const StartButton = styled.button`
  display: flex;
  align-items: center;
  justify-content: center;
  width: 54px;
  margin-right: 5px;
`;

const TaskList = styled.div`
  display: flex;
  gap: 3px;
`;

const TaskButton = styled.button<{ $open?: boolean; $active?: boolean }>`
  display: flex;
  align-items: center;
  justify-content: center;
  width: 59px;
  border: 1px solid ${(p) => (p.$open ? "#4c6080" : "transparent")};
  border-radius: 3px;
  ${(p) =>
    p.$open &&
    css`
      box-shadow: inset 0 0 0 1px rgba(255, 255, 255, 0.6);
      background: ${p.$active ? "linear-gradient(135deg, #f4f7fb, #d0dae8 60%, #dce4ee)" : "linear-gradient(135deg, #cbd6e6, #b4c4da)"};
    `}
`;

const Tray = styled.div`
  display: flex;
  align-items: center;
  gap: 8px;
  margin-left: auto;
`;

const TrayButton = styled.button`
  display: flex;
  justify-content: center;
  width: 16px;
`;

const Clock = styled.time`
  width: 72px;
  text-align: center;
  font-size: 11px;
  line-height: 17px;
  white-space: pre;
`;

const ShowDesktop = styled.button`
  align-self: stretch;
  width: 14px;
  border: 1px solid #4c5c74;
  box-shadow: inset 0 0 0 1px rgba(255, 255, 255, 0.4);
  background: linear-gradient(#a4b0c2, #5c6c84 50%, #8494a8);
`;

const StartOrb = () => (
  <svg width="38" height="38" viewBox="0 0 38 38">
    <defs>
      <radialGradient id="orb" cx="0.5" cy="0.95" r="0.9">
        <stop offset="0" stopColor="#4cdcf8" />
        <stop offset="0.400" stopColor="#1c78b0" />
        <stop offset="1" stopColor="#1c3c64" />
      </radialGradient>
    </defs>
    <circle cx="19" cy="19" r="18" fill="url(#orb)" stroke="#24405c" />
    <path d="M3 15A16.500 16.500 0 0 1 35 15C26 20 12 20 3 15Z" fill="#c8dcec" opacity="0.450" />
    <path d="M9.500 11.500C13 9 16 9.500 18.500 11L17 18.500C14 17 11.500 17 8.500 18.500Z" fill="#f06428" />
    <path d="M20 11.500C23 13 26 13 30 10.500L28 18C25 20 22 20 18.500 18.700Z" fill="#94cc3c" />
    <path d="M8 20C11 18.500 14 18.500 16.800 20L15 27.500C12 26 9.500 26 6.500 27.500Z" fill="#3c9ce8" />
    <path d="M18.300 20.300C21 21.700 24.500 21.700 27.700 19.700L26 27C23 29 20 29 16.500 27.700Z" fill="#fcc828" />
  </svg>
);

const ExplorerTaskIcon = () => (
  <svg width="34" height="30" viewBox="0 0 34 30">
    <path d="M2 4h28v22H2z" fill="#ecd888" stroke="#c8a84c" />
    <path d="M5 1h8v4H5z" fill="#fff" stroke="#999" strokeWidth="0.600" /><path d="M6 1h3v3H6z" fill="#38a048" />
    <path d="M14 3h6v3h-6z" fill="#fff" /><path d="M14 3h2v3h-2z" fill="#e07830" />
    <path d="M21 5h9v3h-9z" fill="#fff" /><path d="M22 5h4v2h-4z" fill="#3878d0" />
    <path d="M1 7h16l2 3h14v16H1z" fill="#f8eaa4" stroke="#d4b860" strokeWidth="0.800" />
    <path d="M6 29V20c0-3 22-3 22 0v9h-5v-6H11v6z" fill="#80ccf0" stroke="#3c98c8" />
  </svg>
);

const MediaTaskIcon = () => (
  <svg width="32" height="28" viewBox="0 0 32 28">
    <path d="M20 3h7v21h-7z" fill="#9cd0ec" stroke="#5494bc" /><path d="M24 3v21" stroke="#5494bc" />
    <path d="M3 2h18v23H3z" fill="#b4dcf0" stroke="#5ca0c8" />
    <circle cx="13" cy="14" r="9.500" fill="#ec7c24" stroke="#c86018" />
    <path d="M10 8.500v11l8.500-5.500z" fill="#fff" />
  </svg>
);

const CursorSvg = styled.svg`
  position: absolute;
  left: 582px;
  top: 612px;
`;

export default function App() {
  return (
    <Screen>
      <GlobalStyle />
      <Wallpaper />
      <Desktop>
        {desktopEntries.map(([name, icon]) => (
          <DesktopButton key={name}>{icon}<Label>{name}</Label></DesktopButton>
        ))}
        <DesktopButton $last><RecycleBin /><Label>Recycle Bin</Label></DesktopButton>
        <Explorer />
      </Desktop>
      <Taskbar>
        <StartButton aria-label="Start"><StartOrb /></StartButton>
        <TaskList>
          <TaskButton $open $active aria-label="Windows Explorer"><ExplorerTaskIcon /></TaskButton>
          <TaskButton aria-label="Media Player"><MediaTaskIcon /></TaskButton>
          <TaskButton aria-label="Google Chrome"><ChromeShape size={32} /></TaskButton>
          <TaskButton aria-label="Visual C#"><VisualStudio kind="cs" size={32} arrow={false} /></TaskButton>
          <TaskButton $open aria-label="Dev-C++"><DevCpp size={32} arrow={false} /></TaskButton>
        </TaskList>
        <Tray>
          <TrayButton aria-label="Show hidden icons"><UpArrow fill="#fff" /></TrayButton>
          <TrayButton aria-label="Network">
            <svg width="16" height="16" viewBox="0 0 16 16">
              <path d="M7 3.500h7.500v7.500H4.500V8M6 14h8M10 11v3" fill="none" stroke="#26323f" strokeWidth="3" />
              <path d="M7 3.500h7.500v7.500H4.500V8M6 14h8M10 11v3" fill="none" stroke="#fff" strokeWidth="1.300" />
              <path d="M1.500 1v3M4.500 1v3M.7 4h4.600v2.500H.7zM3 6.500v4.500h2" fill="none" stroke="#fff" strokeWidth="1.200" />
            </svg>
          </TrayButton>
          <TrayButton aria-label="Action Center">
            <svg width="16" height="16" viewBox="0 0 16 16">
              <path d="M1.500 1v14" stroke="#fff" strokeWidth="1.600" />
              <path d="M3 2c3-1.500 5 1.500 10 0v6c-4 2-6-1-10 0z" fill="#fff" stroke="#48586c" strokeWidth="0.600" />
              <circle cx="11" cy="11" r="4.600" fill="#d42c24" stroke="#fff" strokeWidth="0.600" />
              <path d="M9 9l4 4M13 9l-4 4" stroke="#fff" strokeWidth="1.400" />
            </svg>
          </TrayButton>
          <TrayButton aria-label="Volume">
            <svg width="16" height="16" viewBox="0 0 16 16">
              <path d="M1 5.500h2.500L7.500 1.500v13L3.500 10.500H1z" fill="#fff" stroke="#48586c" strokeWidth="0.600" />
              <path d="M9.500 5.500c1.300 1.500 1.300 3.500 0 5M11.500 4c2 2.500 2 5.500 0 8M13.300 2.500c2.600 3.500 2.600 7.500 0 11" fill="none" stroke="#fff" />
            </svg>
          </TrayButton>
          <Clock>{"3:47 PM\n2/25/2023"}</Clock>
        </Tray>
        <ShowDesktop aria-label="Show desktop" />
      </Taskbar>
      <CursorSvg width="14" height="22" viewBox="0 0 14 22" aria-hidden="true">
        <path d="M1.500 1.500v16l4-3.500 2.500 6 2.500-1-2.500-6h5z" fill="#fff" stroke="#222" />
      </CursorSvg>
    </Screen>
  );
}
